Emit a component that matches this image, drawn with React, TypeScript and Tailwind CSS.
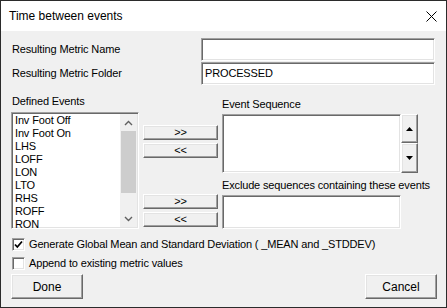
import React from 'react';

const events = ['Inv Foot Off', 'Inv Foot On', 'LHS', 'LOFF', 'LON', 'LTO', 'RHS', 'ROFF', 'RON'];

const sunken =
  'bg-white border border-t-[#a0a0a0] border-l-[#a0a0a0] border-b-white border-r-white shadow-[inset_1px_1px_0_#696969,inset_-1px_-1px_0_#e3e3e3]';
const raised =
  'bg-[#f0f0f0] border border-t-white border-l-white border-b-[#696969] border-r-[#696969] shadow-[inset_-1px_-1px_0_#a0a0a0,inset_1px_1px_0_#e3e3e3]';

const Btn: React.FC<{ label: string; className?: string }> = ({ label, className }) => (
  <div className={`${raised} flex items-center justify-center text-[11px] leading-none ${className ?? ''}`}>
    {label}
  </div>
);

const Chevron: React.FC<{ up?: boolean }> = ({ up }) => (
  <svg width="9" height="6" viewBox="0 0 9 6">
    <polyline
      points={up ? '1,5 4.5,1.5 8,5' : '1,1 4.5,4.5 8,1'}
      fill="none"
      stroke="#606060"
      strokeWidth="1.4"
    />
  </svg>
);

const Tri: React.FC<{ up?: boolean }> = ({ up }) => (
  <svg width="7" height="4" viewBox="0 0 7 4">
    <polygon points={up ? '0,4 3.5,0 7,4' : '0,0 7,0 3.5,4'} fill="#000" />
  </svg>
);

const Check: React.FC<{ checked?: boolean; label: string }> = ({ checked, label }) => (
  <div className="flex items-center h-[13px] ml-[1px]">
    <div className={`${sunken} w-[13px] h-[13px] flex items-center justify-center`}>
      {checked && (
        <svg width="9" height="9" viewBox="0 0 9 9">
          <polyline points="1,4.5 3.3,7 8,1.5" fill="none" stroke="#000" strokeWidth="1.8" />
        </svg>
      )}
    </div>
    <span className="ml-[4px] leading-[13px]">{label}</span>
  </div>
);

export default function App() {
  return (
    <div
      className="w-[447px] h-[308px] border border-[#2b2b2b] flex flex-col text-[11px] tracking-[-0.15px] text-black overflow-hidden"
      style={{ fontFamily: '"Liberation Sans", Arial, sans-serif' }}
    >
      {/* title bar */}
      <div className="h-[30px] bg-white flex items-center justify-between pl-[8px] pr-[9px]">
        <span className="text-[12px] tracking-normal">Time between events</span>
        <svg width="11" height="11" viewBox="0 0 11 11">
          <path d="M0.5 0.5 L10.5 10.5 M10.5 0.5 L0.5 10.5" stroke="#000" strokeWidth="1" />
        </svg>
      </div>

      {/* body */}
      <div className="flex-1 bg-[#f0f0f0] pl-[10px] pr-[9px] pt-[7px] flex flex-col">
        <div className="flex items-center h-[23px]">
          <span className="w-[190px] pl-[1px]">Resulting Metric Name</span>
          <div className={`${sunken} w-[234px] h-[23px]`} />
        </div>
        <div className="flex items-center h-[23px] mt-[1px]">
          <span className="w-[190px] pl-[1px]">Resulting Metric Folder</span>
          <div className={`${sunken} w-[234px] h-[23px] flex items-center pl-[3px]`}>PROCESSED</div>
        </div>

        {/* events section */}
        <div className="flex mt-[9px]">
          <div className="flex flex-col w-[128px]">
            <span className="h-[14px] leading-[14px] pl-[1px]">Defined Events</span>
            <div className={`${sunken} mt-[4px] h-[117px] flex overflow-hidden`}>
              <div className="flex-1 pl-[3px] pt-[1px]">
                {events.map((e) => (
                  <div key={e} className="h-[13px] leading-[13px] whitespace-nowrap">
                    {e}
                  </div>
                ))}
              </div>
              <div className="w-[17px] my-[1px] mr-[1px] bg-[#f0f0f0] flex flex-col">
                <div className="h-[17px] flex items-center justify-center">
                  <Chevron up />
                </div>
                <div className="h-[62px] mx-[1px] bg-[#cdcdcd]" />
                <div className="flex-1" />
                <div className="h-[17px] flex items-center justify-center">
                  <Chevron />
                </div>
              </div>
            </div>
          </div>

          <div className="flex flex-col ml-[4px] w-[75px]">
            <Btn label=">>" className="mt-[31px] h-[15px]" />
            <Btn label="<<" className="mt-[3px] h-[15px]" />
            <Btn label=">>" className="mt-[36px] h-[15px]" />
            <Btn label="<<" className="mt-[3px] h-[15px]" />
          </div>

          <div className="flex flex-col ml-[4px]">
            <span className="mt-[3px] h-[14px] leading-[14px]">Event Sequence</span>
            <div className="flex mt-[3px]">
              <div className={`${sunken} w-[179px] h-[59px]`} />
              <div className="flex flex-col w-[17px]">
                <div className={`${raised} h-[29px] flex items-center justify-center`}>
                  <Tri up />
                </div>
                <div className={`${raised} h-[30px] flex items-center justify-center`}>
                  <Tri />
                </div>
              </div>
            </div>
            <span className="mt-[5px] h-[14px] leading-[14px] whitespace-nowrap">
              Exclude sequences containing these events
            </span>
            <div className={`${sunken} mt-[3px] w-[179px] h-[34px]`} />
          </div>
        </div>

        <div className="mt-[9px] flex flex-col gap-[6px]">
          <Check checked label="Generate Global Mean and Standard Deviation ( _MEAN and _STDDEV)" />
          <Check label="Append to existing metric values" />
        </div>

        <div className="mt-[4px] flex justify-between">
          <Btn label="Done" className="w-[72px] h-[25px] text-[12px] tracking-normal" />
          <Btn label="Cancel" className="w-[72px] h-[25px] text-[12px] tracking-normal" />
        </div>
      </div>
    </div>
  );
}
